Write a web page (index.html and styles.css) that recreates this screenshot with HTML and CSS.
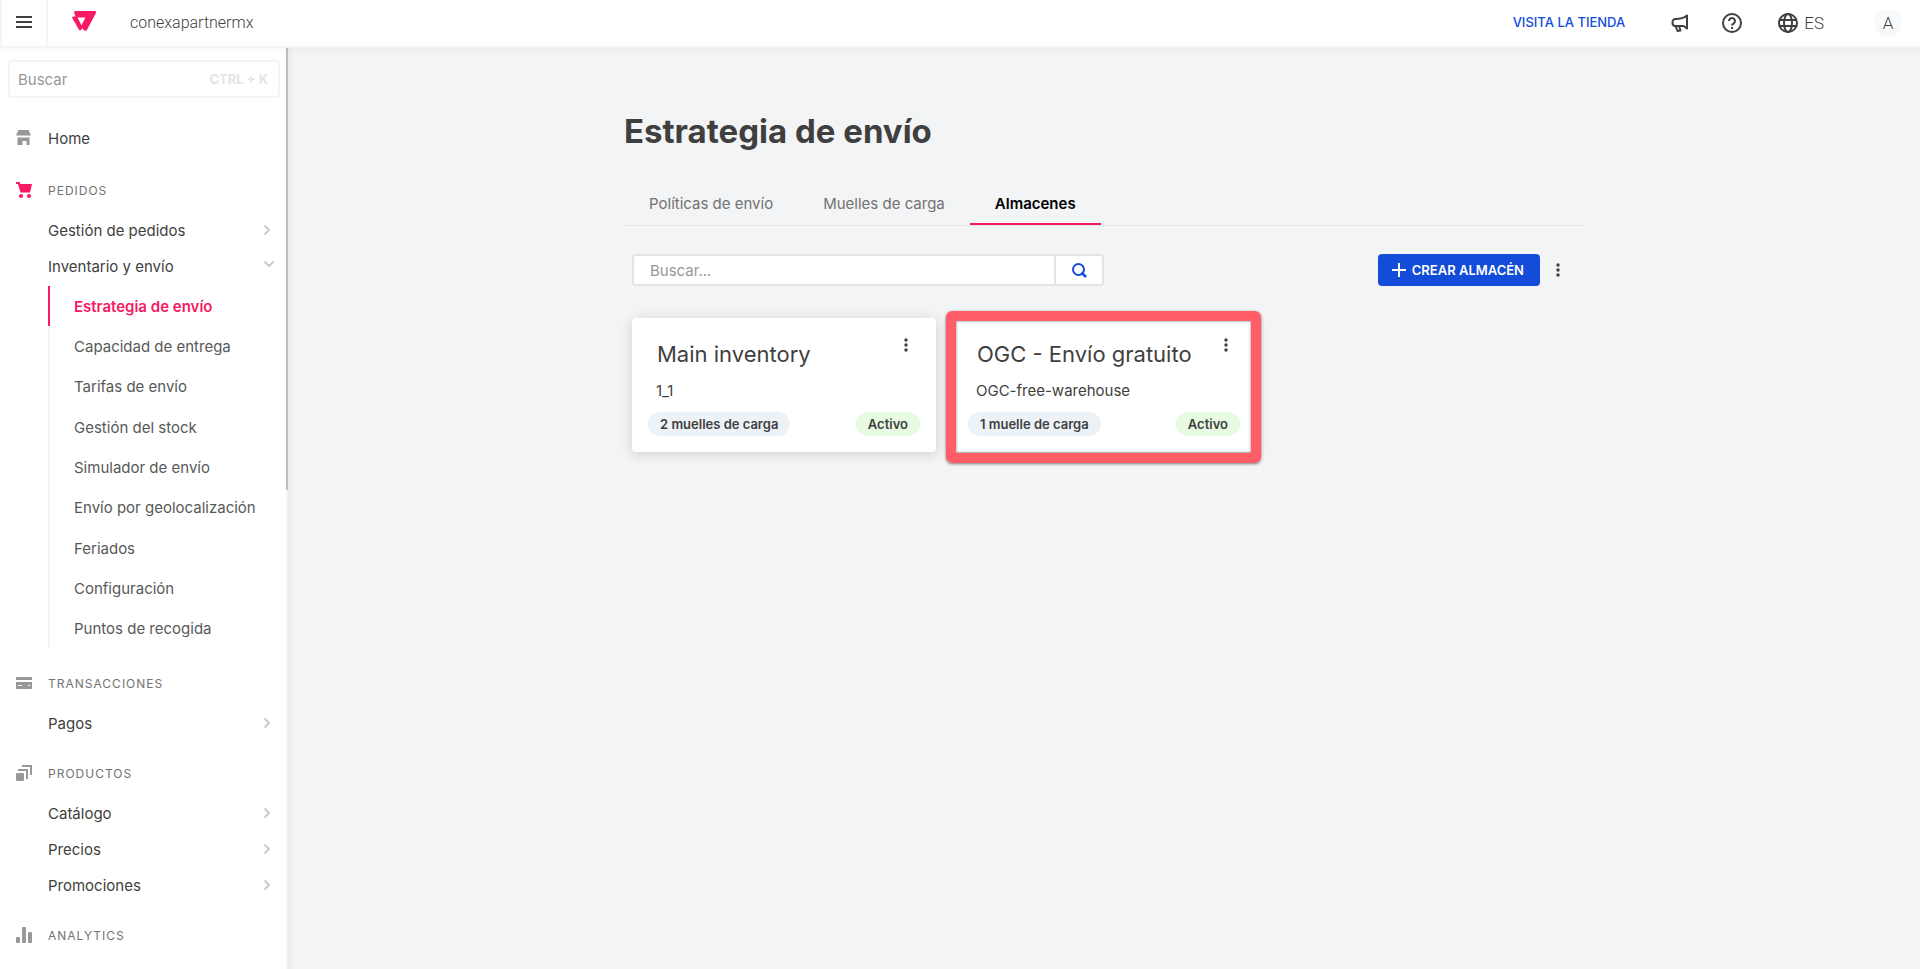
FILE: index.html
```html
<!DOCTYPE html>
<html lang="es">
<head>
    <meta charset="UTF-8">
    <meta name="viewport" content="width=device-width, initial-scale=1.0">
    <title>Estrategia de envío</title>
    <link rel="stylesheet" href="styles.css">
</head>
<body>

    <header class="topbar">
        <button class="menu-btn" aria-label="Menú">
            <svg width="16" height="14" viewBox="0 0 16 14"><path d="M0 2h16M0 7h16M0 12h16" stroke="#3f3f40" stroke-width="2"/></svg>
        </button>
        <a class="logo" href="#" aria-label="Inicio">
            <svg width="24" height="21" viewBox="0 0 24 21"><path fill="#f71963" fill-rule="evenodd" d="M3.500 0H22.500C23.800 0 24.400 1 23.800 2.200L15.200 18.500C14.300 20.300 12.200 20.300 11.300 18.500L10.500 17L9.300 18.700C8.800 19.500 7.500 19.500 7 18.700L.4 7.200C-.2 6.200.4 5.500 1.500 5.500H3.500L2.300 2.300C1.900 1 2.300 0 3.500 0ZM5.500 6.500L9.500 14.200L13.500 6.500Z"/></svg>
        </a>
        <span class="account">conexapartnermx</span>
        <a class="store-link" href="#">VISITA LA TIENDA</a>
        <button class="icon-btn news" aria-label="Novedades">
            <svg width="18" height="20" viewBox="0 0 18 20" fill="none" stroke="#3f3f40" stroke-width="2" stroke-linejoin="round"><path d="M16 2.500v13L12.500 13H4.500a3 3 0 0 1-3-3V9a3 3 0 0 1 3-3C9 6 13 5 16 2.500Z"/><path d="M4.500 13l2 5 3-.5-1.500-4.500"/></svg>
        </button>
        <button class="icon-btn help" aria-label="Ayuda">
            <svg width="20" height="20" viewBox="0 0 20 20" fill="none" stroke="#3f3f40" stroke-width="2"><circle cx="10" cy="10" r="9"/><path d="M7 8a3 3 0 1 1 4.600 2.500C10.500 11.200 10 11.500 10 12.600"/><path d="M10 14v2"/></svg>
        </button>
        <button class="icon-btn lang">
            <svg width="20" height="20" viewBox="0 0 20 20" fill="none" stroke="#3f3f40" stroke-width="2"><circle cx="10" cy="10" r="9"/><ellipse cx="10" cy="10" rx="4" ry="9"/><path d="M1.500 7h17M1.500 13h17"/></svg>
            ES
        </button>
        <button class="avatar">A</button>
    </header>

    <div class="layout">
        <aside class="sidebar">
            <label class="side-search">
                <input type="text" placeholder="Buscar" aria-label="Buscar">
                <span class="shortcut">CTRL + K</span>
            </label>

            <a class="home" href="#">
                <svg width="16" height="16" viewBox="0 0 16 16" fill="#979899"><path d="M2 0h11v2H2zM1.500 2h12L15 5.500H0ZM1.500 7.500h12V15h-3v-4h-4v4h-5z"/></svg>
                Home
            </a>

            <nav>
                <section>
                    <h2>
                        <svg width="16" height="16" viewBox="0 0 16 16" fill="#f71963"><path d="M0 0h3.500l.8 2H16l-2 8.500H4.500L2 2H0z"/><circle cx="5" cy="14" r="2"/><circle cx="13" cy="14" r="2"/></svg>
                        PEDIDOS
                    </h2>
                    <a class="item" href="#">Gestión de pedidos <svg class="right" width="6" height="10" viewBox="0 0 6 10"><path d="M.5.5L5 5L.5 9.500"/></svg></a>
                    <a class="item" href="#">Inventario y envío <svg class="down" width="10" height="6" viewBox="0 0 10 6"><path d="M.5.5L5 5L9.500.5"/></svg></a>
                    <ul class="submenu">
                        <li class="active"><a href="#">Estrategia de envío</a></li>
                        <li><a href="#">Capacidad de entrega</a></li>
                        <li><a href="#">Tarifas de envío</a></li>
                        <li><a href="#">Gestión del stock</a></li>
                        <li><a href="#">Simulador de envío</a></li>
                        <li><a href="#">Envío por geolocalización</a></li>
                        <li><a href="#">Feriados</a></li>
                        <li><a href="#">Configuración</a></li>
                        <li><a href="#">Puntos de recogida</a></li>
                    </ul>
                </section>

                <section>
                    <h2>
                        <svg width="16" height="12" viewBox="0 0 16 12" fill="#979899"><path fill-rule="evenodd" d="M0 0h16v3H0zM0 5h16v6q0 1-1 1H1q-1 0-1-1zM2 8v1h4V8zM12 8v1h2V8z"/></svg>
                        TRANSACCIONES
                    </h2>
                    <a class="item" href="#">Pagos <svg class="right" width="6" height="10" viewBox="0 0 6 10"><path d="M.5.5L5 5L.5 9.500"/></svg></a>
                </section>

                <section>
                    <h2>
                        <svg width="16" height="16" viewBox="0 0 16 16" fill="#979899"><rect y="8" width="8" height="8" rx="1"/><path d="M2 4h10v10h-2V6H2zM6 0h10v10h-2V2H6z"/></svg>
                        PRODUCTOS
                    </h2>
                    <a class="item" href="#">Catálogo <svg class="right" width="6" height="10" viewBox="0 0 6 10"><path d="M.5.5L5 5L.5 9.500"/></svg></a>
                    <a class="item" href="#">Precios <svg class="right" width="6" height="10" viewBox="0 0 6 10"><path d="M.5.5L5 5L.5 9.500"/></svg></a>
                    <a class="item" href="#">Promociones <svg class="right" width="6" height="10" viewBox="0 0 6 10"><path d="M.5.5L5 5L.5 9.500"/></svg></a>
                </section>

                <section>
                    <h2>
                        <svg width="16" height="16" viewBox="0 0 16 16" fill="#979899"><rect y="10" width="4" height="6" rx="1"/><rect x="6" width="4" height="16" rx="1"/><rect x="12" y="5" width="4" height="11" rx="1"/></svg>
                        ANALYTICS
                    </h2>
                </section>
            </nav>
            <div class="scroll-thumb"></div>
        </aside>

        <main>
            <div class="container">
                <h1>Estrategia de envío</h1>

                <div class="tabs">
                    <button>Políticas de envío</button>
                    <button>Muelles de carga</button>
                    <button class="active">Almacenes</button>
                </div>

                <div class="toolbar">
                    <form class="search">
                        <input type="text" placeholder="Buscar..." aria-label="Buscar almacén">
                        <button type="button" aria-label="Buscar">
                            <svg width="15" height="15" viewBox="0 0 15 15" fill="none" stroke="#134cd8" stroke-width="2"><circle cx="6.500" cy="6.500" r="5.500"/><path d="M9.500 9.500L14 14" stroke-width="2.500"/></svg>
                        </button>
                    </form>
                    <button class="create">
                        <svg width="14" height="14" viewBox="0 0 14 14"><path d="M7 0v14M0 7h14" stroke="#fff" stroke-width="2"/></svg>
                        CREAR ALMACÉN
                    </button>
                    <button class="dots" aria-label="Más opciones">
                        <svg width="4" height="14" viewBox="0 0 4 14" fill="#3f3f40"><circle cx="2" cy="2" r="1.700"/><circle cx="2" cy="7" r="1.700"/><circle cx="2" cy="12" r="1.700"/></svg>
                    </button>
                </div>

                <div class="cards">
                    <article class="card">
                        <div class="card-head">
                            <h3>Main inventory</h3>
                            <button class="dots" aria-label="Opciones">
                                <svg width="4" height="14" viewBox="0 0 4 14" fill="#3f3f40"><circle cx="2" cy="2" r="1.700"/><circle cx="2" cy="7" r="1.700"/><circle cx="2" cy="12" r="1.700"/></svg>
                            </button>
                        </div>
                        <p>1_1</p>
                        <div class="tags">
                            <span class="tag">2 muelles de carga</span>
                            <span class="tag green">Activo</span>
                        </div>
                    </article>
                    <article class="card highlight">
                        <div class="card-head">
                            <h3>OGC - Envío gratuito</h3>
                            <button class="dots" aria-label="Opciones">
                                <svg width="4" height="14" viewBox="0 0 4 14" fill="#3f3f40"><circle cx="2" cy="2" r="1.700"/><circle cx="2" cy="7" r="1.700"/><circle cx="2" cy="12" r="1.700"/></svg>
                            </button>
                        </div>
                        <p>OGC-free-warehouse</p>
                        <div class="tags">
                            <span class="tag">1 muelle de carga</span>
                            <span class="tag green">Activo</span>
                        </div>
                    </article>
                </div>
            </div>
        </main>
    </div>

</body>
</html>
```
FILE: styles.css
```css
* { box-sizing: border-box; }
body { margin: 0; height: 100vh; display: flex; flex-direction: column; overflow: hidden; background: #f2f4f5; color: #3f3f40; font-family: Inter, sans-serif; font-size: 15px; }
a { color: inherit; text-decoration: none; }
button, input { font: inherit; color: inherit; border: none; background: none; padding: 0; margin: 0; outline: none; }
button { cursor: pointer; }
svg { flex: none; display: block; }
h1, h2, h3, p, ul { margin: 0; padding: 0; font-weight: normal; }

/* top bar */
.topbar { position: relative; z-index: 2; flex: none; display: flex; align-items: center; height: 48px; padding-right: 18px; background: #fff; border-bottom: 2px solid #f2f4f5; border-left: 2px solid #f2f4f5; box-shadow: 0 4px 0 rgba(0, 0, 0, 0.02); }
.menu-btn { display: flex; align-items: center; justify-content: center; width: 46px; height: 46px; padding-bottom: 2px; border-right: 2px solid #f2f4f5; }
.logo { margin: 0 34px 4px 24px; }
.account { padding-bottom: 2px; font-family: Roboto, sans-serif; font-size: 16px; font-weight: 300; }
.store-link { margin-left: auto; padding-bottom: 2px; color: #134cd8; font-size: 13px; font-weight: 500; }
.icon-btn { display: flex; align-items: center; gap: 6px; font-family: Roboto, sans-serif; font-size: 17px; font-weight: 300; }
.news { margin-left: 46px; }
.help { margin-left: 33px; }
.lang { margin-left: 36px; }
.avatar { width: 28px; height: 28px; margin-left: 50px; border-radius: 50%; background: #f7f9fa; font-family: Roboto, sans-serif; font-size: 17px; font-weight: 300; }

.layout { flex: 1; display: flex; min-height: 0; }

/* sidebar */
.sidebar { position: relative; flex: none; width: 288px; padding: 12px 8px 0; overflow: hidden; background: #fff; box-shadow: inset -2px 0 0 #f2f4f5; }
.side-search { display: flex; align-items: center; height: 38px; padding: 0 10px 0 8px; border: 2px solid #f2f4f5; border-radius: 4px; }
.side-search input { flex: 1; min-width: 0; }
.side-search input::placeholder { color: #979899; opacity: 1; }
.shortcut { color: #e3e4e6; font-size: 13px; font-weight: 700; }
.home { display: flex; align-items: center; gap: 16px; height: 40px; margin-top: 20px; padding-left: 8px; }
section { margin-top: 10px; }
section h2 { display: flex; align-items: center; gap: 16px; height: 44px; padding-left: 8px; color: #727273; font-size: 12px; letter-spacing: 1px; }
.item { display: flex; align-items: center; justify-content: space-between; height: 36px; padding: 0 10px 0 40px; }
.item svg { fill: none; stroke: #cacbcc; stroke-width: 2; }
.item .down { margin: 0 -4px 4px 0; }
.submenu { display: flex; flex-direction: column; min-height: 363px; margin: 2px 0 12px 40px; list-style: none; color: #585959; }
.submenu li { flex: 1; display: flex; align-items: center; padding-left: 24px; border-left: 2px solid #f2f4f5; }
.submenu .active { border-color: #f71963; color: #f71963; font-weight: 600; }
.scroll-thumb { position: absolute; top: 0; right: 0; width: 2px; height: 442px; background: #bfbfc0; }

/* content */
main { flex: 1; padding-top: 57px; box-shadow: inset 4px 0 0 #edeff1; }
.container { max-width: 960px; margin: 0 auto; }
h1 { font-size: 33px; line-height: 52px; font-weight: 700; }
.tabs { display: flex; margin-top: 20px; border-bottom: 1px solid #e3e4e6; }
.tabs button { height: 48px; padding: 6px 25px 0; border-bottom: 2px solid transparent; color: #727273; }
.tabs .active { border-color: #f71963; color: #000; font-weight: 600; }
.toolbar { display: flex; align-items: center; margin-top: 28px; padding: 0 16px 0 8px; }
.search { display: flex; width: 472px; height: 32px; background: #fff; border: 2px solid #e3e4e6; border-radius: 4px; }
.search input { flex: 1; min-width: 0; padding-left: 16px; }
.search input::placeholder { color: #979899; opacity: 1; }
.search button { display: flex; align-items: center; justify-content: center; width: 48px; border-left: 2px solid #e3e4e6; }
.create { display: flex; align-items: center; gap: 6px; height: 32px; margin-left: auto; padding: 0 16px 0 14px; border-radius: 4px; background: #134cd8; color: #fff; font-size: 13px; font-weight: 600; }
.dots { display: flex; justify-content: center; width: 20px; }
.toolbar .dots { margin-left: 8px; }

.cards { display: grid; grid-template-columns: repeat(3, 304px); gap: 16px; margin: 32px 8px; }
.card { position: relative; padding: 16px; background: #fff; border-radius: 4px; box-shadow: 0 2px 12px rgba(61, 62, 64, 0.2); }
.card-head { display: flex; align-items: flex-start; justify-content: space-between; padding: 4px 4px 0 9px; }
.card-head h3 { font-size: 22px; line-height: 32px; }
.card p { padding: 9px 8px; line-height: 24px; }
.tags { display: flex; justify-content: space-between; }
.tag { padding: 0 12px; border-radius: 12px; background: #edf2f7; font-size: 13px; line-height: 24px; font-weight: 600; }
.green { background: #e7fbe2; }
.highlight::after { content: ""; position: absolute; inset: -7px -5px -11px -6px; border: 10px solid #ff5d67; border-radius: 6px; box-shadow: 0 1px 3px rgba(0, 0, 0, 0.5), inset 0 0 3px rgba(0, 0, 0, 0.5); pointer-events: none; }
```
